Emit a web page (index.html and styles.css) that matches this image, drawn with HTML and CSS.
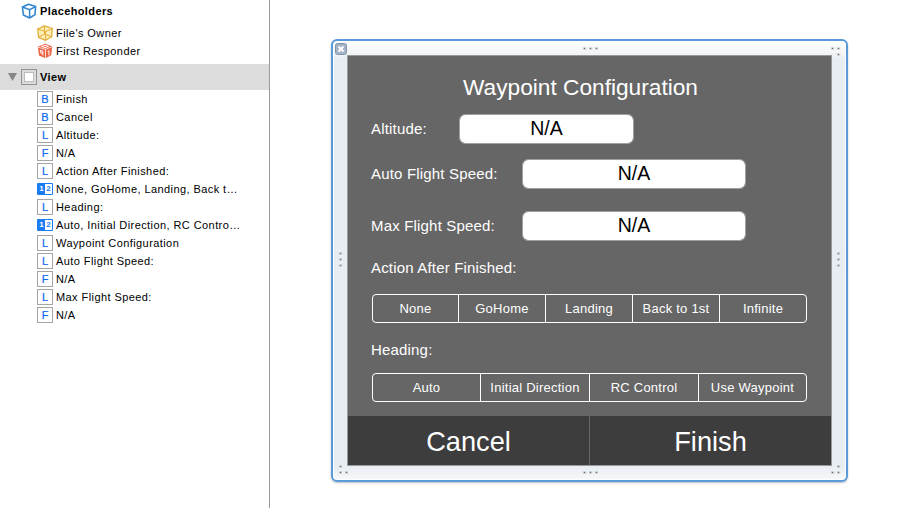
FILE: index.html
```
<!DOCTYPE html>
<html lang="en">
<head>
<meta charset="utf-8">
<title>Waypoint Configuration</title>
<link rel="stylesheet" href="styles.css">
</head>
<body>
<aside class="outline">
  <div class="row group-head"><svg class="icon" viewBox="0 0 16 16"><path d="M7.5 1.2 14.6 3.6 14 11.6 8.6 15 2.4 12 1.4 4Z" fill="#fff" stroke="#3287d0" stroke-width="1.6" stroke-linejoin="round"/><path d="M1.4 4 8.6 6.6 14.6 3.6M8.6 6.6V15" fill="none" stroke="#3287d0" stroke-width="1.5"/></svg><b>Placeholders</b></div>
  <div class="row"><svg class="icon" viewBox="0 0 16 16"><path d="M7.5 .8 15.3 3.5 14.6 11.8 8.6 15.3 1.6 12.4 .7 4Z" fill="#fdeeb8" stroke="#e3ad35" stroke-width="1.3" stroke-linejoin="round"/><path d="M.7 4 8.6 6.6 15.3 3.5M8.6 6.6V15.3M1.6 12.4 7.5 9 14.6 11.8M7.5 1V9" fill="none" stroke="#e3ad35"/></svg><span>File's Owner</span></div>
  <div class="row"><svg class="icon" viewBox="0 0 16 16"><path d="M8 .8 15.2 3.3 14.2 12.2 8.5 15.2 2 12.5.8 3.8Z" fill="#ee6343"/><path d="M1.2 4.2 8.5 6.3 14.8 3.8M8.5 6.3V15" fill="none" stroke="#fff" stroke-width=".8"/><path d="M4.5 3.4 8 2.4 11.5 3.4 8 4.6ZM3.3 7.3 5.8 8V12.4M3.3 7.3 3.6 9.8 5.8 10.3M10.6 8.4 12 7.7V12.4" fill="none" stroke="#fff" stroke-width="1"/></svg><span>First Responder</span></div>
  <div class="row view-head"><svg class="arrow" viewBox="0 0 9 8"><path d="M0 0H9L4.5 8Z" fill="#868686"/></svg><i class="view-icon"></i><b>View</b></div>
  <div class="row"><i class="kind">B</i><span>Finish</span></div>
  <div class="row"><i class="kind">B</i><span>Cancel</span></div>
  <div class="row"><i class="kind">L</i><span>Altitude:</span></div>
  <div class="row"><i class="kind">F</i><span>N/A</span></div>
  <div class="row"><i class="kind">L</i><span>Action After Finished:</span></div>
  <div class="row"><i class="switch"><em>1</em><em class="on">2</em></i><span>None, GoHome, Landing, Back t…</span></div>
  <div class="row"><i class="kind">L</i><span>Heading:</span></div>
  <div class="row"><i class="switch"><em>1</em><em class="on">2</em></i><span>Auto, Initial Direction, RC Contro…</span></div>
  <div class="row"><i class="kind">L</i><span>Waypoint Configuration</span></div>
  <div class="row"><i class="kind">L</i><span>Auto Flight Speed:</span></div>
  <div class="row"><i class="kind">F</i><span>N/A</span></div>
  <div class="row"><i class="kind">L</i><span>Max Flight Speed:</span></div>
  <div class="row"><i class="kind">F</i><span>N/A</span></div>
</aside>
<main class="editor">
  <div class="frame">
    <svg class="close" viewBox="0 0 12 12"><rect x=".5" y=".5" width="11" height="11" rx="2" fill="#a4b3c5" stroke="#8293a8"/><path d="M3.5 3.5 8.5 8.5M8.5 3.5 3.5 8.5" stroke="#fff" stroke-width="2"/></svg>
    <svg class="handles" viewBox="331 39 517 443"><path d="M584 48.5h1m5 0h1m5 0h1M832 48.5h1m5 0h1M838 54.5h1M340 253.5h1m-1 6h1m-1 6h1M838 253.5h1m-1 6h1m-1 6h1M340 466.5h1m-1 6h1m5 0h1M584 472.5h1m5 0h1m5 0h1M832 472.5h1m5 0h1M838 466.5h1" stroke="#aeb4b9" stroke-opacity=".6" stroke-width="2.4" stroke-linecap="square"/><path d="M584 48.5h1m5 0h1m5 0h1M832 48.5h1m5 0h1M838 54.5h1M340 253.5h1m-1 6h1m-1 6h1M838 253.5h1m-1 6h1m-1 6h1M340 466.5h1m-1 6h1m5 0h1M584 472.5h1m5 0h1m5 0h1M832 472.5h1m5 0h1M838 466.5h1" stroke="#666" stroke-width="1"/></svg>
    <section class="panel">
      <h1>Waypoint Configuration</h1>
      <div class="field altitude"><label>Altitude:</label><div class="value">N/A</div></div>
      <div class="field auto-speed"><label>Auto Flight Speed:</label><div class="value">N/A</div></div>
      <div class="field max-speed"><label>Max Flight Speed:</label><div class="value">N/A</div></div>
      <div class="caption action">Action After Finished:</div>
      <div class="segments five"><span>None</span><span>GoHome</span><span>Landing</span><span>Back to 1st</span><span>Infinite</span></div>
      <div class="caption heading">Heading:</div>
      <div class="segments four"><span>Auto</span><span>Initial Direction</span><span>RC Control</span><span>Use Waypoint</span></div>
      <footer><div>Cancel</div><div>Finish</div></footer>
    </section>
  </div>
</main>
</body>
</html>
```
FILE: styles.css
```
* { box-sizing: border-box; }
body {
  margin: 0;
  width: 912px;
  height: 508px;
  display: flex;
  overflow: hidden;
  background: #fff;
  color: #000;
  font-family: "Liberation Sans", Arial, sans-serif;
}
.outline {
  width: 270px;
  flex: none;
  border-right: 1px solid #999;
  font-size: 11px;
  letter-spacing: .42px;
}
.row {
  height: 18px;
  display: flex;
  align-items: center;
  padding-left: 37px;
  gap: 3px;
  white-space: nowrap;
}
.row b { letter-spacing: .38px; }
.icon { width: 16px; height: 16px; flex: none; }
.group-head { height: 22px; margin-bottom: 2px; padding-left: 21px; }
.view-head { height: 26px; margin-top: 4px; padding-left: 8px; background: #dcdcdc; }
.arrow { width: 9px; height: 8px; margin-right: 1px; }
.view-icon {
  width: 16px;
  height: 16px;
  flex: none;
  border: 1px solid #929292;
  background: #fff;
  box-shadow: inset 0 0 0 2px #dcdcdc, inset 0 0 0 3px #bbb;
}
.kind {
  width: 16px;
  height: 16px;
  flex: none;
  border: 1px solid #a5a5a5;
  color: #0a68ee;
  -webkit-text-stroke: .2px #0a68ee;
  font-style: normal;
  font-size: 11px;
  line-height: 15px;
  letter-spacing: 0;
  text-align: center;
}
.switch {
  width: 16px;
  height: 12px;
  flex: none;
  display: flex;
  padding: 1px;
  border-radius: 1px;
  background: #1a7cf5;
  color: #fff;
}
.switch em {
  width: 7px;
  font: bold 8px/10px "Liberation Sans", Arial, sans-serif;
  letter-spacing: 0;
  text-align: center;
}
.switch .on { background: #fff; color: #1a7cf5; }
.editor { flex: 1; padding: 39px 0 0 61px; }
.frame {
  position: relative;
  width: 517px;
  height: 443px;
  padding: 14px;
  border: 2px solid #5b9ad9;
  border-radius: 6px;
  background: linear-gradient(#fff, #f0f3f6 14px, #e7edf2 18px, #e7edf2 424px, #f5f7f9 437px);
  box-shadow: inset 0 0 0 1px #fff, 0 1px 2px rgba(0, 0, 0, .25);
}
.close { position: absolute; left: 2px; top: 2px; width: 12px; height: 12px; }
.handles { position: absolute; left: -2px; top: -2px; width: 517px; height: 443px; }
.panel {
  width: 485px;
  height: 411px;
  display: flex;
  flex-direction: column;
  border: 1px solid #999;
  background: #666;
  color: #fff;
}
h1 {
  height: 58px;
  margin: 0;
  font-size: 22.7px;
  font-weight: 400;
  line-height: 63px;
  text-align: center;
  padding-right: 18px;
}
.field {
  height: 29px;
  display: flex;
  align-items: center;
  padding-left: 23px;
  margin-bottom: 16px;
  font-size: 15px;
  letter-spacing: .18px;
}
.field label { width: 151px; }
.value {
  width: 224px;
  height: 30px;
  margin-bottom: -1px;
  border: 1px solid #a0a0a0;
  border-radius: 6px;
  background: #fff;
  background-clip: padding-box;
  color: #000;
  font-size: 19.5px;
  line-height: 27px;
  letter-spacing: 0;
  text-align: center;
}
.altitude label { width: 88px; }
.altitude .value { width: 175px; }
.auto-speed { margin-bottom: 23px; }
.max-speed { margin-bottom: 0; }
.caption { padding-left: 23px; font-size: 15px; letter-spacing: .18px; }
.action { height: 54px; line-height: 56px; }
.heading { height: 50px; line-height: 54px; }
.segments {
  width: 435px;
  height: 29px;
  display: grid;
  margin-left: 24px;
  border: 1px solid #fff;
  border-radius: 4px;
  font-size: 13px;
  line-height: 27px;
  letter-spacing: .24px;
  text-align: center;
}
.five { grid-template-columns: 86px 87px 87px 87px 1fr; }
.four { grid-template-columns: 108px 109px 109px 1fr; }
.segments span:not(:last-child) { border-right: 1px solid #fff; }
footer {
  height: 49px;
  display: grid;
  grid-template: 49px / 242px 1fr;
  margin-top: 14px;
  background: #3d3d3d;
  font-size: 27.2px;
  line-height: 51px;
  text-align: center;
}
footer div:first-child { border-right: 1px solid #666; }
```
